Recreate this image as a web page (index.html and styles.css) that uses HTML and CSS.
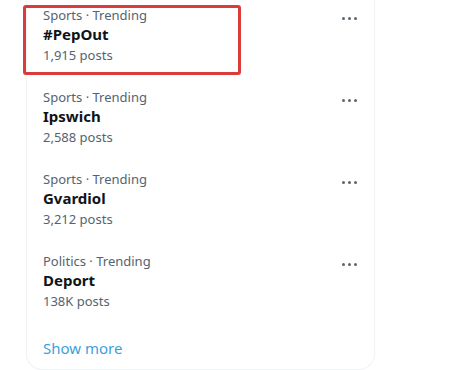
FILE: index.html
```html
<!DOCTYPE html>
<html>
<head>
<meta charset="utf-8">
<link rel="stylesheet" href="styles.css">
</head>
<body>
<div class="card">
  <div class="row">
    <div class="info">
      <div class="meta">Sports · Trending</div>
      <div class="title">#PepOut</div>
      <div class="meta posts">1,915 posts</div>
    </div>
    <div class="more"><span></span><span></span><span></span></div>
    <div class="highlight"></div>
  </div>
  <div class="row">
    <div class="info">
      <div class="meta">Sports · Trending</div>
      <div class="title">Ipswich</div>
      <div class="meta posts">2,588 posts</div>
    </div>
    <div class="more"><span></span><span></span><span></span></div>
  </div>
  <div class="row">
    <div class="info">
      <div class="meta">Sports · Trending</div>
      <div class="title">Gvardiol</div>
      <div class="meta posts">3,212 posts</div>
    </div>
    <div class="more"><span></span><span></span><span></span></div>
  </div>
  <div class="row">
    <div class="info">
      <div class="meta">Politics · Trending</div>
      <div class="title">Deport</div>
      <div class="meta posts">138K posts</div>
    </div>
    <div class="more"><span></span><span></span><span></span></div>
  </div>
  <div class="show">Show more</div>
</div>
</body>
</html>
```
FILE: styles.css
```css
html, body {
  margin: 0;
  padding: 0;
  background: #ffffff;
}
body {
  font-family: "Noto Sans", "Liberation Sans", sans-serif;
  width: 474px;
  height: 370px;
  overflow: hidden;
}
.card {
  margin-left: 26px;
  width: 347px;
  border: 1px solid #eff3f4;
  border-top: none;
  border-radius: 0 0 16px 16px;
  padding-bottom: 11px;
}
.row {
  position: relative;
  display: flex;
  justify-content: space-between;
  align-items: flex-start;
  padding: 6px 17px 16px 16px;
}
.meta {
  font-size: 13px;
  line-height: 18px;
  color: #536471;
}
.title {
  font-size: 15px;
  line-height: 21px;
  font-weight: 700;
  color: #0f1419;
}
.posts {
  line-height: 21px;
}
.more {
  display: flex;
  gap: 3px;
  margin-top: 11px;
}
.more span {
  width: 3px;
  height: 3px;
  border-radius: 50%;
  background: #5b6670;
}
.show {
  padding: 10px 16px 0;
  font-size: 15px;
  line-height: 20px;
  color: #3d9fd9;
}
.highlight {
  position: absolute;
  left: -4px;
  top: 5px;
  width: 212px;
  height: 64px;
  border: 3px solid #dc3b3b;
  border-radius: 3px;
}
```
